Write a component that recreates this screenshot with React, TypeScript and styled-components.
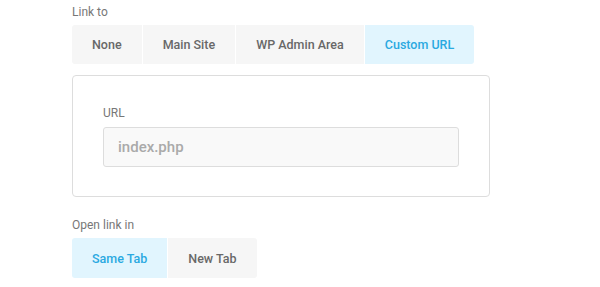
import React, { useState } from 'react';
import styled, { createGlobalStyle } from 'styled-components';

const GlobalStyle = createGlobalStyle`
  body {
    margin: 0;
    background: #fff;
    font-family: Roboto, 'Liberation Sans', sans-serif;
  }
`;

const Page = styled.div`
  padding: 4px 0 0 72px;
  display: flex;
  flex-direction: column;
  align-items: flex-start;
`;

const Label = styled.div`
  font-size: 12px;
  line-height: 17px;
  color: #777;
  margin-bottom: 4px;
`;

const TabBar = styled.div`
  display: flex;
  gap: 1px;
  border-radius: 3px;
  overflow: hidden;
`;

const Tab = styled.button<{ $active?: boolean; $tall?: boolean }>`
  height: ${(p) => (p.$tall ? '40px' : '39px')};
  padding: 0 20px;
  border: 0;
  font-family: inherit;
  font-size: 12.5px;
  font-weight: 500;
  color: ${(p) => (p.$active ? '#2aa9e1' : '#686868')};
  background: ${(p) => (p.$active ? '#e1f5fe' : '#f6f6f6')};
  cursor: pointer;
`;

const Card = styled.div`
  box-sizing: border-box;
  width: 418px;
  margin-top: 11px;
  margin-bottom: 20px;
  padding: 30px 30px 29px;
  border: 1px solid #ddd;
  border-radius: 4px;
`;

const FieldLabel = styled.div`
  font-size: 12px;
  line-height: 15px;
  color: #777;
  margin-bottom: 6px;
`;

const Input = styled.input`
  box-sizing: border-box;
  width: 356px;
  height: 40px;
  padding: 0 14px;
  border: 1px solid #ddd;
  border-radius: 3px;
  background: #f9f9f9;
  font-family: inherit;
  font-size: 15px;
  font-weight: 500;
  color: #aaa;
  outline: none;
  &::placeholder {
    color: #aaa;
  }
`;

const linkOptions = ['None', 'Main Site', 'WP Admin Area', 'Custom URL'];
const tabOptions = ['Same Tab', 'New Tab'];

export default function App() {
  const [link, setLink] = useState('Custom URL');
  const [target, setTarget] = useState('Same Tab');

  return (
    <Page>
      <GlobalStyle />
      <Label>Link to</Label>
      <TabBar>
        {linkOptions.map((o) => (
          <Tab key={o} $active={link === o} onClick={() => setLink(o)}>
            {o}
          </Tab>
        ))}
      </TabBar>
      <Card>
        <FieldLabel>URL</FieldLabel>
        <Input placeholder="index.php" />
      </Card>
      <Label>Open link in</Label>
      <TabBar>
        {tabOptions.map((o) => (
          <Tab key={o} $tall $active={target === o} onClick={() => setTarget(o)}>
            {o}
          </Tab>
        ))}
      </TabBar>
    </Page>
  );
}
